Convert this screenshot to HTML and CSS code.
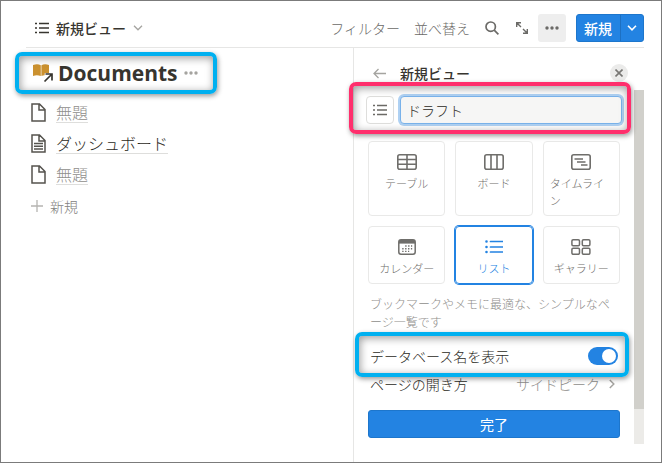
FILE: index.html
```html
<!DOCTYPE html>
<html lang="ja">
<head>
<meta charset="utf-8">
<meta name="viewport" content="width=device-width, initial-scale=1">
<title>Documents</title>
<link rel="stylesheet" href="styles.css">
</head>
<body>
<div class="page">
  <header class="topbar">
    <button class="view-switch" type="button">
      <svg class="icon" width="14" height="12" viewBox="0 0 14 12" fill="none" stroke="currentColor" stroke-width="1.3"><path d="M4 1.5h10M4 6h10M4 10.5h10M0 1.5h2M0 6h2M0 10.5h2"/></svg>
      <span>新規ビュー</span>
      <svg class="icon muted" width="10" height="6" viewBox="0 0 10 6" fill="none" stroke="currentColor" stroke-width="1.3"><path d="M1 .8l4 4 4-4"/></svg>
    </button>
    <nav class="tools" aria-label="ビューの操作">
      <button class="tool text" type="button">フィルター</button>
      <button class="tool text" type="button">並べ替え</button>
      <button class="tool search" type="button" aria-label="検索">
        <svg class="icon" width="14" height="14" viewBox="0 0 14 14" fill="none" stroke="currentColor" stroke-width="1.7"><circle cx="5.7" cy="5.7" r="4.7"/><path d="M9.2 9.2l4.2 4.2"/></svg>
      </button>
      <button class="tool expand" type="button" aria-label="拡大">
        <svg class="icon" width="12" height="12" viewBox="0 0 12 12" fill="none" stroke="currentColor" stroke-width="1.4"><path d="M.7 5V.7H5M.7.7L5 5M11.3 7v4.3H7M11.3 11.3L7 7"/></svg>
      </button>
      <button class="tool more" type="button" aria-label="その他">
        <svg class="icon" width="14" height="4" viewBox="0 0 14 4" fill="currentColor"><circle cx="2" cy="2" r="1.7"/><circle cx="7" cy="2" r="1.7"/><circle cx="12" cy="2" r="1.7"/></svg>
      </button>
      <div class="create">
        <button class="create-main" type="button">新規</button>
        <button class="create-menu" type="button" aria-label="作成メニュー">
          <svg class="icon" width="10" height="6" viewBox="0 0 10 6" fill="none" stroke="currentColor" stroke-width="1.6"><path d="M1 .8l4 4 4-4"/></svg>
        </button>
      </div>
    </nav>
  </header>

  <div class="content">
    <main class="database">
      <div class="title-row marked marked-title">
        <svg class="icon" width="20" height="20" viewBox="0 0 20 20" fill="none"><path d="M0 2q4.500-1.800 7.800.2v10.800q-4-1.500-7.800 0zM16 2q-4.200-1.800-7.600.2v10.800q1.500-.6 3.200-.7l.2-2.300h4.200z" fill="#cb912f"/><path d="M11.500 18.500l7-7M12.500 11h6.500v6.500" stroke="#37352f" stroke-width="1.7"/></svg>
        <h1>Documents</h1>
        <button class="title-more" type="button" aria-label="データベースのメニュー">
          <svg class="icon" width="16" height="4" viewBox="0 0 16 4" fill="currentColor"><circle cx="3" cy="2" r="1.7"/><circle cx="8" cy="2" r="1.7"/><circle cx="13" cy="2" r="1.7"/></svg>
        </button>
      </div>
      <ul class="pages">
        <li><a class="untitled" href="#page-1">
          <svg class="icon" width="15" height="19" viewBox="0 0 15 19" fill="none" stroke="#55534e" stroke-width="1.5"><path d="M1 1h7.500L14 6.500V18H1zM8 1v6h6"/></svg>
          <span>無題</span></a></li>
        <li><a href="#page-2">
          <svg class="icon" width="15" height="19" viewBox="0 0 15 19" fill="none" stroke="#55534e" stroke-width="1.5"><path d="M1 1h7.500L14 6.500V18H1zM8 1v6h6M3 9.500h9M3 12.300h9M3 15.100h9"/></svg>
          <span>ダッシュボード</span></a></li>
        <li><a class="untitled" href="#page-3">
          <svg class="icon" width="15" height="19" viewBox="0 0 15 19" fill="none" stroke="#55534e" stroke-width="1.5"><path d="M1 1h7.500L14 6.500V18H1zM8 1v6h6"/></svg>
          <span>無題</span></a></li>
      </ul>
      <button class="add-page" type="button">
        <svg class="icon" width="12" height="12" viewBox="0 0 12 12" fill="none" stroke="#b5b4b1" stroke-width="1.3"><path d="M6 0v12M0 6h12"/></svg>
        <span>新規</span>
      </button>
    </main>

    <aside class="panel">
      <div class="panel-head">
        <button class="back" type="button" aria-label="戻る">
          <svg class="icon" width="13" height="11" viewBox="0 0 13 11" fill="none" stroke="currentColor" stroke-width="1.3"><path d="M13 5.500H1M5.500 1L1 5.500 5.500 10"/></svg>
        </button>
        <h2>新規ビュー</h2>
        <button class="close" type="button" aria-label="閉じる">
          <svg class="icon" width="8" height="8" viewBox="0 0 8 8" fill="none" stroke="currentColor" stroke-width="1.6"><path d="M.5.5l7 7M7.500.5l-7 7"/></svg>
        </button>
      </div>
      <div class="panel-body">
        <form class="settings">
          <div class="name-row marked marked-name">
            <button class="pick-icon" type="button" aria-label="アイコンを選択">
              <svg class="icon" width="14" height="12" viewBox="0 0 14 12" fill="none" stroke="currentColor" stroke-width="1.5"><path d="M4 1.500h10M4 6h10M4 10.500h10M0 1.500h2M0 6h2M0 10.500h2"/></svg>
            </button>
            <input class="view-name" type="text" value="ドラフト" aria-label="ビュー名">
          </div>

          <div class="types">
            <button class="type" type="button">
              <svg class="icon" width="20" height="16" viewBox="0 0 20 16" fill="none" stroke="currentColor" stroke-width="1.6"><rect x=".8" y=".8" width="18.400" height="14.400" rx="2"/><path d="M1 5.500h18M1 10.300h18M10 1v14" /></svg>
              <span>テーブル</span>
            </button>
            <button class="type" type="button">
              <svg class="icon" width="20" height="16" viewBox="0 0 20 16" fill="none" stroke="currentColor" stroke-width="1.600"><rect x=".8" y=".8" width="18.400" height="14.400" rx="2"/><path d="M7 1v14M13 1v14"/></svg>
              <span>ボード</span>
            </button>
            <button class="type" type="button">
              <svg class="icon" width="20" height="16" viewBox="0 0 20 16" fill="none" stroke="currentColor" stroke-width="1.600"><rect x=".8" y=".8" width="18.400" height="14.400" rx="2"/><path d="M3.500 5H12M6 8h8.500M10 11h6.500" stroke-width="1.400"/></svg>
              <span>タイムライン</span>
            </button>
            <button class="type" type="button">
              <svg class="icon" width="18" height="16" viewBox="0 0 18 16" fill="none" stroke="currentColor"><rect x=".8" y=".8" width="16.400" height="14.400" rx="2.200" stroke-width="1.500"/><path d="M1 2.800h16" stroke-width="3.600"/><path d="M7.200 7h7M4.200 9.700h10M4.200 12.400h7" stroke-width="1.400" stroke-dasharray="1.400 1.500"/></svg>
              <span>カレンダー</span>
            </button>
            <button class="type selected" type="button" aria-pressed="true">
              <svg class="icon" width="18" height="16" viewBox="0 0 18 16" fill="none" stroke="currentColor" stroke-width="1.700" stroke-linecap="round"><path d="M5.500 2.500h12M5.500 8h12M5.500 13h12"/><path d="M1.500 2.500h0M1.500 8h0M1.500 13h0" stroke-width="2.600"/></svg>
              <span>リスト</span>
            </button>
            <button class="type" type="button">
              <svg class="icon" width="20" height="16" viewBox="0 0 20 16" fill="none" stroke="currentColor" stroke-width="1.500"><rect x=".9" y=".8" width="7.600" height="6" rx="1.200"/><rect x="11.300" y=".8" width="7.600" height="6" rx="1.200"/><rect x=".9" y="9.300" width="7.600" height="6" rx="1.200"/><rect x="11.300" y="9.300" width="7.600" height="6" rx="1.200"/></svg>
              <span>ギャラリー</span>
            </button>
          </div>

          <p class="hint">ブックマークやメモに最適な、シンプルなページ一覧です</p>

          <div class="option marked marked-option">
            <label for="show-name">データベース名を表示</label>
            <input class="switch" id="show-name" type="checkbox" checked>
          </div>
          <button class="option open-mode" type="button">
            <span>ページの開き方</span>
            <span class="value">サイドピーク
              <svg class="icon" width="6" height="10" viewBox="0 0 6 10" fill="none" stroke="currentColor" stroke-width="1.500"><path d="M.8 1l4 4-4 4"/></svg>
            </span>
          </button>
          <button class="done" type="button">完了</button>
        </form>
        <div class="scrollbar"><div class="thumb"></div></div>
      </div>
    </aside>
  </div>
</div>
</body>
</html>
```

FILE: styles.css
```css
* {
  box-sizing: border-box;
}

body {
  margin: 0;
  color: #2b2923;
  background: #fff;
  font-family: "Noto Sans CJK JP", sans-serif;
  font-size: 14px;
  font-weight: 300;
  line-height: 20px;
}

button,
input {
  margin: 0;
  padding: 0;
  border: 0;
  background: none;
  color: inherit;
  font: inherit;
}

h1,
h2,
p,
ul {
  margin: 0;
  padding: 0;
}

.icon {
  display: block;
  flex: none;
}

.page {
  display: flex;
  flex-direction: column;
  min-height: 100vh;
  border: 1px solid #7b7b7b;
}

/* Top bar */
.topbar {
  display: flex;
  align-items: center;
  justify-content: space-between;
  height: 47px;
  margin: 0 17px 0 25px;
  padding-top: 8px;
  border-bottom: 1px solid #e6e6e5;
}

.view-switch {
  display: flex;
  align-items: center;
  gap: 7px;
  padding-left: 9px;
  color: #37352f;
  font-weight: 500;
}

.muted {
  color: #a5a4a0;
}

.tools {
  display: flex;
  align-items: center;
  color: #6b6a67;
}

.tool {
  display: flex;
  align-items: center;
  justify-content: center;
  height: 28px;
}

.text {
  margin-right: 14px;
}

.search {
  width: 16px;
  margin-right: 15px;
}

.expand {
  width: 14px;
  margin-right: 9px;
}

.more {
  width: 28px;
  border-radius: 3px;
  background: #eeeeee;
}

.create {
  display: flex;
  height: 28px;
  margin-left: 10px;
  border: 1px solid #1d76cc;
  border-radius: 3px;
  color: #fff;
  background: #2383e2;
  overflow: hidden;
}

.create-main {
  padding: 0 8px 0 7px;
  font-weight: 500;
}

.create-menu {
  display: flex;
  align-items: center;
  justify-content: center;
  width: 23px;
  border-left: 1px solid #1d70c2;
}

/* Columns */
.content {
  display: grid;
  grid-template-columns: 1fr 291px;
  flex: 1;
  padding-right: 17px;
}

.database {
  padding: 8px 16px 0 30px;
}

.title-row {
  display: flex;
  align-items: center;
  gap: 5px;
  height: 34px;
  padding-left: 2px;
}

h1 {
  color: #37352f;
  font-family: "Open Sans", sans-serif;
  font-size: 21px;
  font-weight: 700;
  line-height: 30px;
}

.title-more {
  padding: 8px 0;
  color: #a5a4a0;
}

.pages {
  margin-top: 7px;
  list-style: none;
}

.pages a {
  display: flex;
  align-items: center;
  gap: 10px;
  height: 31px;
  color: #2b2923;
  font-size: 16px;
  text-decoration: none;
}

.pages span {
  border-bottom: 1px solid #dededc;
}

.pages .untitled {
  color: #8f8e8b;
}

.add-page {
  display: flex;
  align-items: center;
  gap: 7px;
  height: 32px;
  color: #83827e;
}

/* Side panel */
.panel {
  border-left: 1px solid #e6e6e5;
}

.panel-head {
  display: flex;
  align-items: center;
  height: 42px;
  padding: 8px 16px 0 19px;
}

.back {
  padding-right: 14px;
  color: #a5a4a0;
}

h2 {
  color: #37352f;
  font-size: 14px;
  font-weight: 500;
}

.close {
  display: flex;
  align-items: center;
  justify-content: center;
  width: 18px;
  height: 18px;
  margin-left: auto;
  border-radius: 50%;
  color: #787774;
  background: #ebebea;
}

.panel-body {
  display: flex;
}

.settings {
  flex: 1;
  min-width: 0;
  padding: 6px 14px;
}

.scrollbar {
  width: 10px;
  background: #ecebe8;
}

.thumb {
  height: 90%;
  background: #d1d0cb;
}

.name-row {
  display: flex;
  gap: 6px;
  margin: 0 -2px 17px;
}

.pick-icon {
  display: flex;
  align-items: center;
  justify-content: center;
  width: 28px;
  height: 28px;
  border: 1px solid #dededc;
  border-radius: 4px;
  color: #6b6a66;
}

.view-name {
  flex: 1;
  min-width: 0;
  height: 28px;
  padding: 0 6px;
  border: 1px solid #79b2ea;
  border-radius: 4px;
  outline: 0;
  background: #f6f6f5;
  box-shadow: 0 0 0 2px #afd1f3;
}

.types {
  display: grid;
  grid-template-columns: repeat(3, 1fr);
  gap: 10px;
}

.type {
  display: flex;
  flex-direction: column;
  align-items: center;
  justify-content: flex-start;
  gap: 5px;
  padding: 12px 6px 6px;
  border: 1px solid #e9e9e8;
  border-radius: 4px;
  color: #6f6e6b;
  font-size: 11px;
  line-height: 17px;
  text-align: left;
}

.selected {
  border-color: #2383e2;
  color: #2383e2;
  box-shadow: 0 0 0 1px #2383e2;
}

.hint {
  margin: 11px 0;
  padding: 0 2px;
  color: #8f8e8b;
  font-size: 12px;
  line-height: 18px;
}

.option {
  display: flex;
  align-items: center;
  justify-content: space-between;
  height: 28px;
  padding: 0 2px;
}

.open-mode {
  width: 100%;
}

.value {
  display: flex;
  align-items: center;
  gap: 9px;
  padding-right: 3px;
  color: #8f8e8b;
}

.value .icon {
  color: #a5a4a0;
}

.switch {
  display: flex;
  width: 30px;
  height: 18px;
  padding: 2px;
  border-radius: 9px;
  background: #2383e2;
  appearance: none;
}

.switch::before {
  width: 14px;
  height: 14px;
  margin-left: auto;
  border-radius: 50%;
  background: #fff;
  content: "";
}

.done {
  width: 100%;
  height: 28px;
  margin-top: 12px;
  border: 1px solid #1d76cc;
  border-radius: 3px;
  color: #fff;
  background: #2383e2;
  font-weight: 400;
}

/* Callout frames laid over the rows they point at */
.marked {
  position: relative;
}

.marked::after {
  position: absolute;
  z-index: 1;
  border: 4px solid #00b0f0;
  border-radius: 7px;
  box-shadow: 1px 2px 5px rgba(0, 0, 0, 0.4), inset 1px 2px 8px rgba(0, 0, 0, 0.4);
  content: "";
  pointer-events: none;
}

.marked-title {
  width: 184px;
}

.marked-title::after {
  inset: -4px -2px -4px -16px;
}

.marked-name::after {
  inset: -14px -9px -10px -17px;
  border-color: #ff2e6c;
}

.marked-option::after {
  inset: -10px -9px -7px -13px;
}
```
